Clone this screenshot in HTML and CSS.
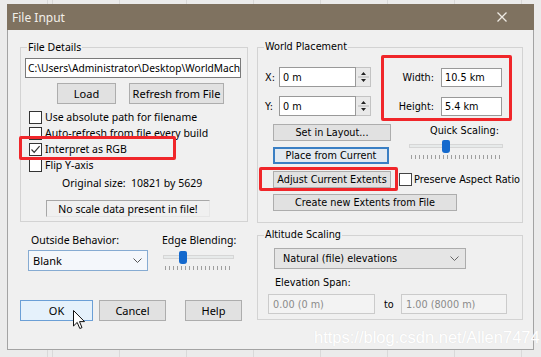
FILE: index.html
```html
<!DOCTYPE html>
<html>
<head>
<meta charset="utf-8">
<title>File Input</title>
<link rel="stylesheet" href="styles.css">
</head>
<body>
<div class="dialog">
  <div class="titlebar">
    <span class="title">File Input</span>
    <svg class="close" width="10" height="10" viewBox="0 0 10 10"><path d="M0.5 0.5 L9.5 9.5 M9.5 0.5 L0.5 9.5" stroke="#efebe4" stroke-width="1.3" fill="none"/></svg>
  </div>
  <div class="client">
    <div class="col-left">
      <div class="group g-file">
        <span class="glabel">File Details</span>
        <div class="tbox path"><span class="pathtext">C:\Users\Administrator\Desktop\WorldMach</span></div>
        <div class="btnrow">
          <div class="btn b-load">Load</div>
          <div class="btn b-refresh">Refresh from File</div>
        </div>
        <div class="chk"><span class="box"></span>Use absolute path for filename</div>
        <div class="chk"><span class="box"></span>Auto-refresh from file every build</div>
        <div class="chk"><span class="box"><svg width="11" height="11" viewBox="0 0 11 11"><path d="M1.5 5.5 L4.2 8.3 L9.6 2.2" stroke="#333" stroke-width="1.2" fill="none"/></svg></span>Interpret as RGB</div>
        <div class="chk"><span class="box"></span>Flip Y-axis</div>
        <div class="origsize">Original size:&nbsp; 10821 by 5629</div>
        <div class="status">No scale data present in file!</div>
        <div class="redbox rb-rgb"></div>
      </div>
      <div class="outside-row">
        <div class="ob">
          <div class="lbl">Outside Behavior:</div>
          <div class="select sel-blank"><span>Blank</span><svg width="9" height="5" viewBox="0 0 9 5"><path d="M0.5 0.5 L4.5 4.5 L8.5 0.5" stroke="#555" fill="none"/></svg></div>
        </div>
        <div class="eb">
          <div class="lbl">Edge Blending:</div>
          <div class="slider s-edge">
            <div class="track"></div>
            <div class="thumb"></div>
            <div class="ticks"></div>
          </div>
        </div>
      </div>
      <div class="btns-bottom">
        <div class="btn b-ok">OK</div>
        <div class="btn b-cancel">Cancel</div>
        <div class="btn b-help">Help</div>
      </div>
    </div>
    <div class="col-right">
      <div class="group g-world">
        <span class="glabel">World Placement</span>
        <div class="xyrow">
          <span class="axl">X:</span>
          <div class="tbox num">0 m</div>
          <div class="spin"><svg width="13" height="18" viewBox="0 0 13 18"><path d="M4 7 L6.5 4 L9 7 Z M4 11 L6.5 14 L9 11 Z" fill="#222"/><path d="M1 9 H12" stroke="#b5b5b5"/></svg></div>
          <span class="whl">Width:</span>
          <div class="tbox wh">10.5 km</div>
        </div>
        <div class="xyrow r2">
          <span class="axl">Y:</span>
          <div class="tbox num">0 m</div>
          <div class="spin"><svg width="13" height="18" viewBox="0 0 13 18"><path d="M4 7 L6.5 4 L9 7 Z M4 11 L6.5 14 L9 11 Z" fill="#222"/><path d="M1 9 H12" stroke="#b5b5b5"/></svg></div>
          <span class="whl">Height:</span>
          <div class="tbox wh">5.4 km</div>
        </div>
        <div class="lower">
          <div class="btn rb b-set">Set in Layout...</div>
          <div class="qs">
            <div class="qlbl">Quick Scaling:</div>
            <div class="slider s-quick">
              <div class="track"></div>
              <div class="thumb"></div>
              <div class="ticks"></div>
            </div>
          </div>
          <div class="btn rb b-place">Place from Current</div>
          <div class="btn rb b-adjust">Adjust Current Extents</div>
          <div class="chk2"><span class="box"></span>Preserve Aspect Ratio</div>
          <div class="btn rb b-create">Create new Extents from File</div>
        </div>
        <div class="redbox rb-wh"></div>
        <div class="redbox rb-adj"></div>
      </div>
      <div class="group g-alt">
        <span class="glabel">Altitude Scaling</span>
        <div class="select sel-nat"><span>Natural (file) elevations</span><svg width="9" height="5" viewBox="0 0 9 5"><path d="M0.5 0.5 L4.5 4.5 L8.5 0.5" stroke="#666" fill="none"/></svg></div>
        <div class="elbl">Elevation Span:</div>
        <div class="spanrow">
          <div class="tbox dis d1">0.00 (0 m)</div>
          <span class="to">to</span>
          <div class="tbox dis d2">1.00 (8000 m)</div>
        </div>
      </div>
    </div>
    <div class="watermark">https://blog.csdn.net/Allen7474</div>
    <svg class="cursor" width="13" height="20" viewBox="0 0 13 20"><path d="M0.5 0.5 L0.5 16 L4.2 12.4 L6.8 18.5 L9 17.6 L6.5 11.6 L11.5 11.6 Z" fill="#fff" stroke="#111" stroke-width="1" stroke-linejoin="round"/></svg>
  </div>
</div>
</body>
</html>
```

FILE: styles.css
```css
* { box-sizing: border-box; }
html, body { margin: 0; }
body {
  width: 541px;
  height: 357px;
  overflow: hidden;
  padding: 4px 0 0 7px;
  background-color: #ebebeb;
  background-image: repeating-linear-gradient(to right, #d9d9d9 0 1px, transparent 1px 67px);
  background-position: 52px 0;
  font-family: "Noto Sans", sans-serif;
  font-size: 10.5px;
  color: #000;
}
.dialog {
  width: 527px;
  height: 346px;
  display: flex;
  flex-direction: column;
}
.titlebar {
  height: 26px;
  flex: none;
  background: #7f7260;
  color: #f2efe9;
  display: flex;
  align-items: center;
  padding-left: 5px;
  font-size: 12px;
}
.close { margin-left: auto; margin-right: 27px; }
.client {
  flex: 1;
  position: relative;
  background: #f0f0f0;
  border: 1px solid #a3a3a3;
  border-top: none;
  display: flex;
  gap: 9px;
  padding: 17px 0 0 12px;
}
.col-left { width: 228px; flex: none; display: flex; flex-direction: column; }
.col-right { width: 266px; flex: none; display: flex; flex-direction: column; font-family: "DejaVu Sans", sans-serif; font-size: 9.7px; }

.group { position: relative; border: 1px solid #d3d3d3; }
.glabel {
  position: absolute;
  top: -9px;
  left: 6px;
  padding: 0 1px;
  background: #f0f0f0;
  line-height: 16px;
  white-space: nowrap;
}
.g-file { height: 175px; display: flex; flex-direction: column; align-items: flex-start; }
.tbox {
  background: #fff;
  border: 1px solid #8c8c8c;
  white-space: nowrap;
  overflow: hidden;
  display: flex;
  align-items: center;
  padding-left: 3px;
  flex: none;
}
.path { margin: 10px 0 0 4px; width: 216px; height: 20px; font-size: 10.2px; border-color: #7a7a7a; padding-left: 2px; }
.pathtext { white-space: nowrap; }
.btn {
  background: #e1e1e1;
  border: 1px solid #adadad;
  display: flex;
  align-items: center;
  justify-content: center;
  white-space: nowrap;
  flex: none;
}
.btnrow { margin: 5px 0 0 36px; display: flex; gap: 13px; }
.btnrow .btn { height: 21px; font-size: 11px; }
.b-load { width: 59px; }
.b-refresh { width: 95px; }
.chk { display: flex; align-items: center; height: 16px; padding-left: 8px; white-space: nowrap; }
.btnrow + .chk { margin-top: 5px; }
.box {
  width: 13px;
  height: 13px;
  border: 1px solid #333;
  background: #fff;
  margin-right: 3px;
  flex: none;
  display: flex;
  align-items: center;
  justify-content: center;
}
.origsize { margin: 2px 0 0 41px; line-height: 16px; white-space: nowrap; }
.status {
  margin: 9px 0 0 25px;
  width: 164px;
  height: 17px;
  border: 1px solid;
  border-color: #a7a7a7 #e6e6e6 #e6e6e6 #a7a7a7;
  display: flex;
  align-items: center;
  justify-content: center;
  white-space: nowrap;
}
.redbox { position: absolute; border: 3px solid #f0262a; border-radius: 2px; }
.rb-rgb { left: -2px; top: 88px; width: 157px; height: 24px; }

.outside-row { display: flex; margin-top: 10px; }
.ob { margin-left: 8px; width: 120px; flex: none; }
.lbl { line-height: 16px; padding-left: 3px; white-space: nowrap; }
.eb .lbl { padding-left: 0; }
.select {
  margin-top: 2px;
  height: 21px;
  display: flex;
  align-items: center;
  justify-content: space-between;
  padding: 0 5px 0 5px;
  white-space: nowrap;
}
.sel-blank { background: #f4f7fb; border: 1px solid #86abd2; font-size: 11px; padding-left: 4px; }
.eb { margin-left: 14px; width: 72px; flex: none; }
.slider { position: relative; height: 22px; }
.track {
  position: absolute;
  left: 1px;
  right: 0;
  top: 5px;
  height: 4px;
  background: #e7eaea;
  border: 1px solid #d6d6d6;
}
.thumb {
  position: absolute;
  top: 1px;
  width: 8px;
  height: 13px;
  background: #1469cd;
  border-radius: 2px 2px 3px 3px;
}
.ticks {
  position: absolute;
  top: 16px;
  left: 3px;
  right: 3px;
  height: 4px;
  background-image: repeating-linear-gradient(to right, #9e9e9e 0 1px, transparent 1px 4px);
}
.s-edge { margin-top: 2px; }
.s-edge .thumb { left: 17px; }

.btns-bottom { display: flex; margin-top: 28px; }
.btns-bottom .btn { height: 21px; font-size: 11px; }
.b-ok { width: 73px; background: #e5f1fb; border-color: #6b9fd6; }
.b-cancel { width: 67px; margin-left: 6px; }
.b-help { width: 57px; margin-left: 19px; }

.g-world { height: 176px; }
.xyrow { margin-top: 19px; padding-left: 7px; display: flex; align-items: center; height: 20px; }
.xyrow.r2 { margin-top: 9px; }
.axl { width: 14px; flex: none; white-space: nowrap; }
.num { width: 77px; height: 20px; border-color: #999; }
.spin {
  width: 15px;
  height: 20px;
  flex: none;
  border: 1px solid #c3c3c3;
  border-left: none;
  background: #e9e9e9;
  display: flex;
  align-items: center;
  justify-content: center;
}
.whl { width: 63px; flex: none; text-align: right; white-space: nowrap; }
.wh { width: 61px; height: 19px; margin-left: 7px; border-color: #999; }
.lower {
  margin-top: 8px;
  padding-left: 15px;
  display: grid;
  grid-template-columns: 118px 124px;
  grid-template-rows: 23px 24px 23px 17px;
  column-gap: 8px;
}
.rb { height: 17px; }
.b-set { grid-column: 1; grid-row: 1; }
.b-place { grid-column: 1; grid-row: 2; width: 116px; background: #e3eaf1; border: 2px solid #3a7fc4; }
.b-adjust { grid-column: 1; grid-row: 3; }
.b-create { grid-column: 1 / span 2; grid-row: 4; width: 184px; }
.qs { grid-column: 2; grid-row: 1 / span 2; }
.qlbl { text-align: center; margin: -1px 0 0 7px; line-height: 16px; white-space: nowrap; }
.s-quick { margin: 0 0 0 9px; width: 95px; }
.s-quick .thumb { left: 34px; }
.chk2 { grid-column: 2; grid-row: 3; display: flex; align-items: center; height: 14px; margin-top: 1px; white-space: nowrap; }
.chk2 .box { margin-right: 2px; border-color: #444; }
.rb-wh { left: 123px; top: 7px; width: 131px; height: 66px; }
.rb-adj { left: 1px; top: 119px; width: 139px; height: 24px; }

.g-alt { margin-top: 12px; height: 85px; }
.sel-nat {
  margin: 12px 0 0 16px;
  width: 192px;
  background: #e5e5e5;
  border: 1px solid #acacac;
  padding: 0 6px 0 8px;
}
.elbl { margin-top: 6px; padding-left: 17px; line-height: 16px; white-space: nowrap; }
.spanrow { display: flex; align-items: center; margin-top: 3px; padding-left: 10px; }
.dis { height: 20px; background: #f3f3f3; border-color: #cbcbcb; color: #8a8a8a; padding-left: 4px; }
.d1 { width: 107px; }
.d2 { width: 106px; }
.to { width: 26px; flex: none; padding-left: 9px; }

.watermark {
  position: absolute;
  left: 306px;
  top: 298px;
  font-family: "Liberation Sans", Arial, sans-serif;
  font-size: 16.5px;
  color: #ffffff;
  text-shadow: 0 0 1px #dcdcdc;
  white-space: nowrap;
}
.cursor { position: absolute; left: 65px; top: 280px; }
```
